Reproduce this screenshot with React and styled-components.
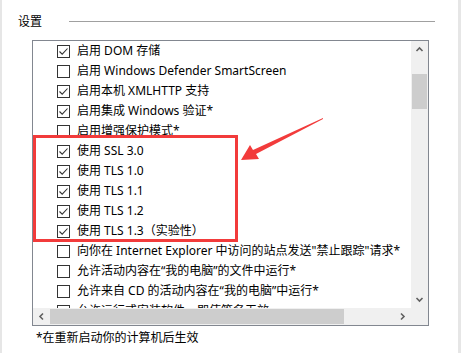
import React from 'react';
import styled, { createGlobalStyle } from 'styled-components';

const GlobalStyle = createGlobalStyle`
  html, body { margin: 0; padding: 0; background: #fff; }
  body {
    font-family: "Noto Sans", "Noto Sans CJK SC", sans-serif;
    font-size: 12px;
    color: #000;
  }
`;

const Frame = styled.div`
  position: relative;
  width: 461px;
  height: 353px;
  box-sizing: border-box;
  border-left: 2px solid #e6e6e6;
  border-right: 3px solid #e6e6e6;
  overflow: hidden;
`;

const Header = styled.div`
  display: flex;
  align-items: center;
  height: 16px;
  padding: 14px 0 0 16px;
  gap: 27px;
`;

const HeaderLabel = styled.span`
  line-height: 16px;
`;

const HeaderLine = styled.div`
  width: 366px;
  height: 1px;
  background: #a0a0a0;
  margin-top: -2px;
`;

const ListBox = styled.div`
  margin: 10px 0 0 30px;
  width: 397px;
  height: 286px;
  box-sizing: border-box;
  border: 1px solid #828790;
  display: grid;
  grid-template-columns: 1fr 17px;
  grid-template-rows: 1fr 17px;
`;

const ListContent = styled.div`
  overflow: hidden;
  padding-left: 24px;
`;

const Row = styled.div`
  display: flex;
  align-items: center;
  height: 20px;
  gap: 7px;
  white-space: nowrap;
`;

const Box = styled.span`
  flex: none;
  width: 13px;
  height: 13px;
  box-sizing: border-box;
  border: 1px solid #333;
  background: #fff;
  display: flex;
  align-items: center;
  justify-content: center;
`;

const Label = styled.span`
  line-height: 20px;
`;

const VScroll = styled.div`
  background: #f0f0f0;
  display: flex;
  flex-direction: column;
  align-items: center;
`;

const HScroll = styled.div`
  background: #f0f0f0;
  display: flex;
  align-items: center;
`;

const Corner = styled.div`
  background: #f0f0f0;
`;

const ArrowBtn = styled.div`
  flex: none;
  width: 17px;
  height: 17px;
  display: flex;
  align-items: center;
  justify-content: center;
`;

const VThumb = styled.div`
  width: 15px;
  height: 35px;
  background: #cdcdcd;
  margin-top: 16px;
`;

const Spacer = styled.div`
  flex: 1;
`;

const HThumb = styled.div`
  width: 294px;
  height: 15px;
  background: #cdcdcd;
`;

const Footer = styled.div`
  padding: 4px 0 0 34px;
  line-height: 16px;
`;

const Highlight = styled.div`
  position: absolute;
  left: 31px;
  top: 135px;
  width: 205px;
  height: 107px;
  box-sizing: border-box;
  border: 3px solid #f23b3b;
`;

const Pointer = styled.svg`
  position: absolute;
  left: 230px;
  top: 110px;
`;

const Check = () => (
  <svg width="11" height="11" viewBox="0 0 11 11">
    <polyline points="1.5,5.5 4.2,8.2 9.5,2.5" fill="none" stroke="#333" strokeWidth="1.1" />
  </svg>
);

const Chevron = ({ dir }) => {
  const pts = {
    up: '1.5,6 4.5,3 7.5,6',
    down: '1.5,3 4.5,6 7.5,3',
    left: '6,1.5 3,4.5 6,7.5',
    right: '3,1.5 6,4.5 3,7.5',
  }[dir];
  return (
    <svg width="9" height="9" viewBox="0 0 9 9">
      <polyline points={pts} fill="none" stroke="#606060" strokeWidth="1.6" />
    </svg>
  );
};

const items = [
  { text: '启用 DOM 存储', on: true },
  { text: '启用 Windows Defender SmartScreen', on: false },
  { text: '启用本机 XMLHTTP 支持', on: true },
  { text: '启用集成 Windows 验证*', on: true },
  { text: '启用增强保护模式*', on: false },
  { text: '使用 SSL 3.0', on: true },
  { text: '使用 TLS 1.0', on: true },
  { text: '使用 TLS 1.1', on: true },
  { text: '使用 TLS 1.2', on: true },
  { text: '使用 TLS 1.3（实验性）', on: true },
  { text: '向你在 Internet Explorer 中访问的站点发送"禁止跟踪"请求*', on: false },
  { text: '允许活动内容在“我的电脑”的文件中运行*', on: false },
  { text: '允许来自 CD 的活动内容在“我的电脑”中运行*', on: false },
  { text: '允许运行或安装软件，即使签名无效', on: false },
];

export default function App() {
  return (
    <>
      <GlobalStyle />
      <Frame>
        <Header>
          <HeaderLabel>设置</HeaderLabel>
          <HeaderLine />
        </Header>
        <ListBox>
          <ListContent>
            {items.map((it) => (
              <Row key={it.text}>
                <Box>{it.on && <Check />}</Box>
                <Label>{it.text}</Label>
              </Row>
            ))}
          </ListContent>
          <VScroll>
            <ArrowBtn><Chevron dir="up" /></ArrowBtn>
            <VThumb />
            <Spacer />
            <ArrowBtn><Chevron dir="down" /></ArrowBtn>
          </VScroll>
          <HScroll>
            <ArrowBtn><Chevron dir="left" /></ArrowBtn>
            <HThumb />
            <Spacer />
            <ArrowBtn><Chevron dir="right" /></ArrowBtn>
          </HScroll>
          <Corner />
        </ListBox>
        <Footer>*在重新启动你的计算机后生效</Footer>
        <Highlight />
        <Pointer width="100" height="60" viewBox="0 0 100 60">
          <polygon points="91,8 21,40 18,35 9,50 27,49 24,44 91,9" fill="#f23b3b" />
        </Pointer>
      </Frame>
    </>
  );
}
